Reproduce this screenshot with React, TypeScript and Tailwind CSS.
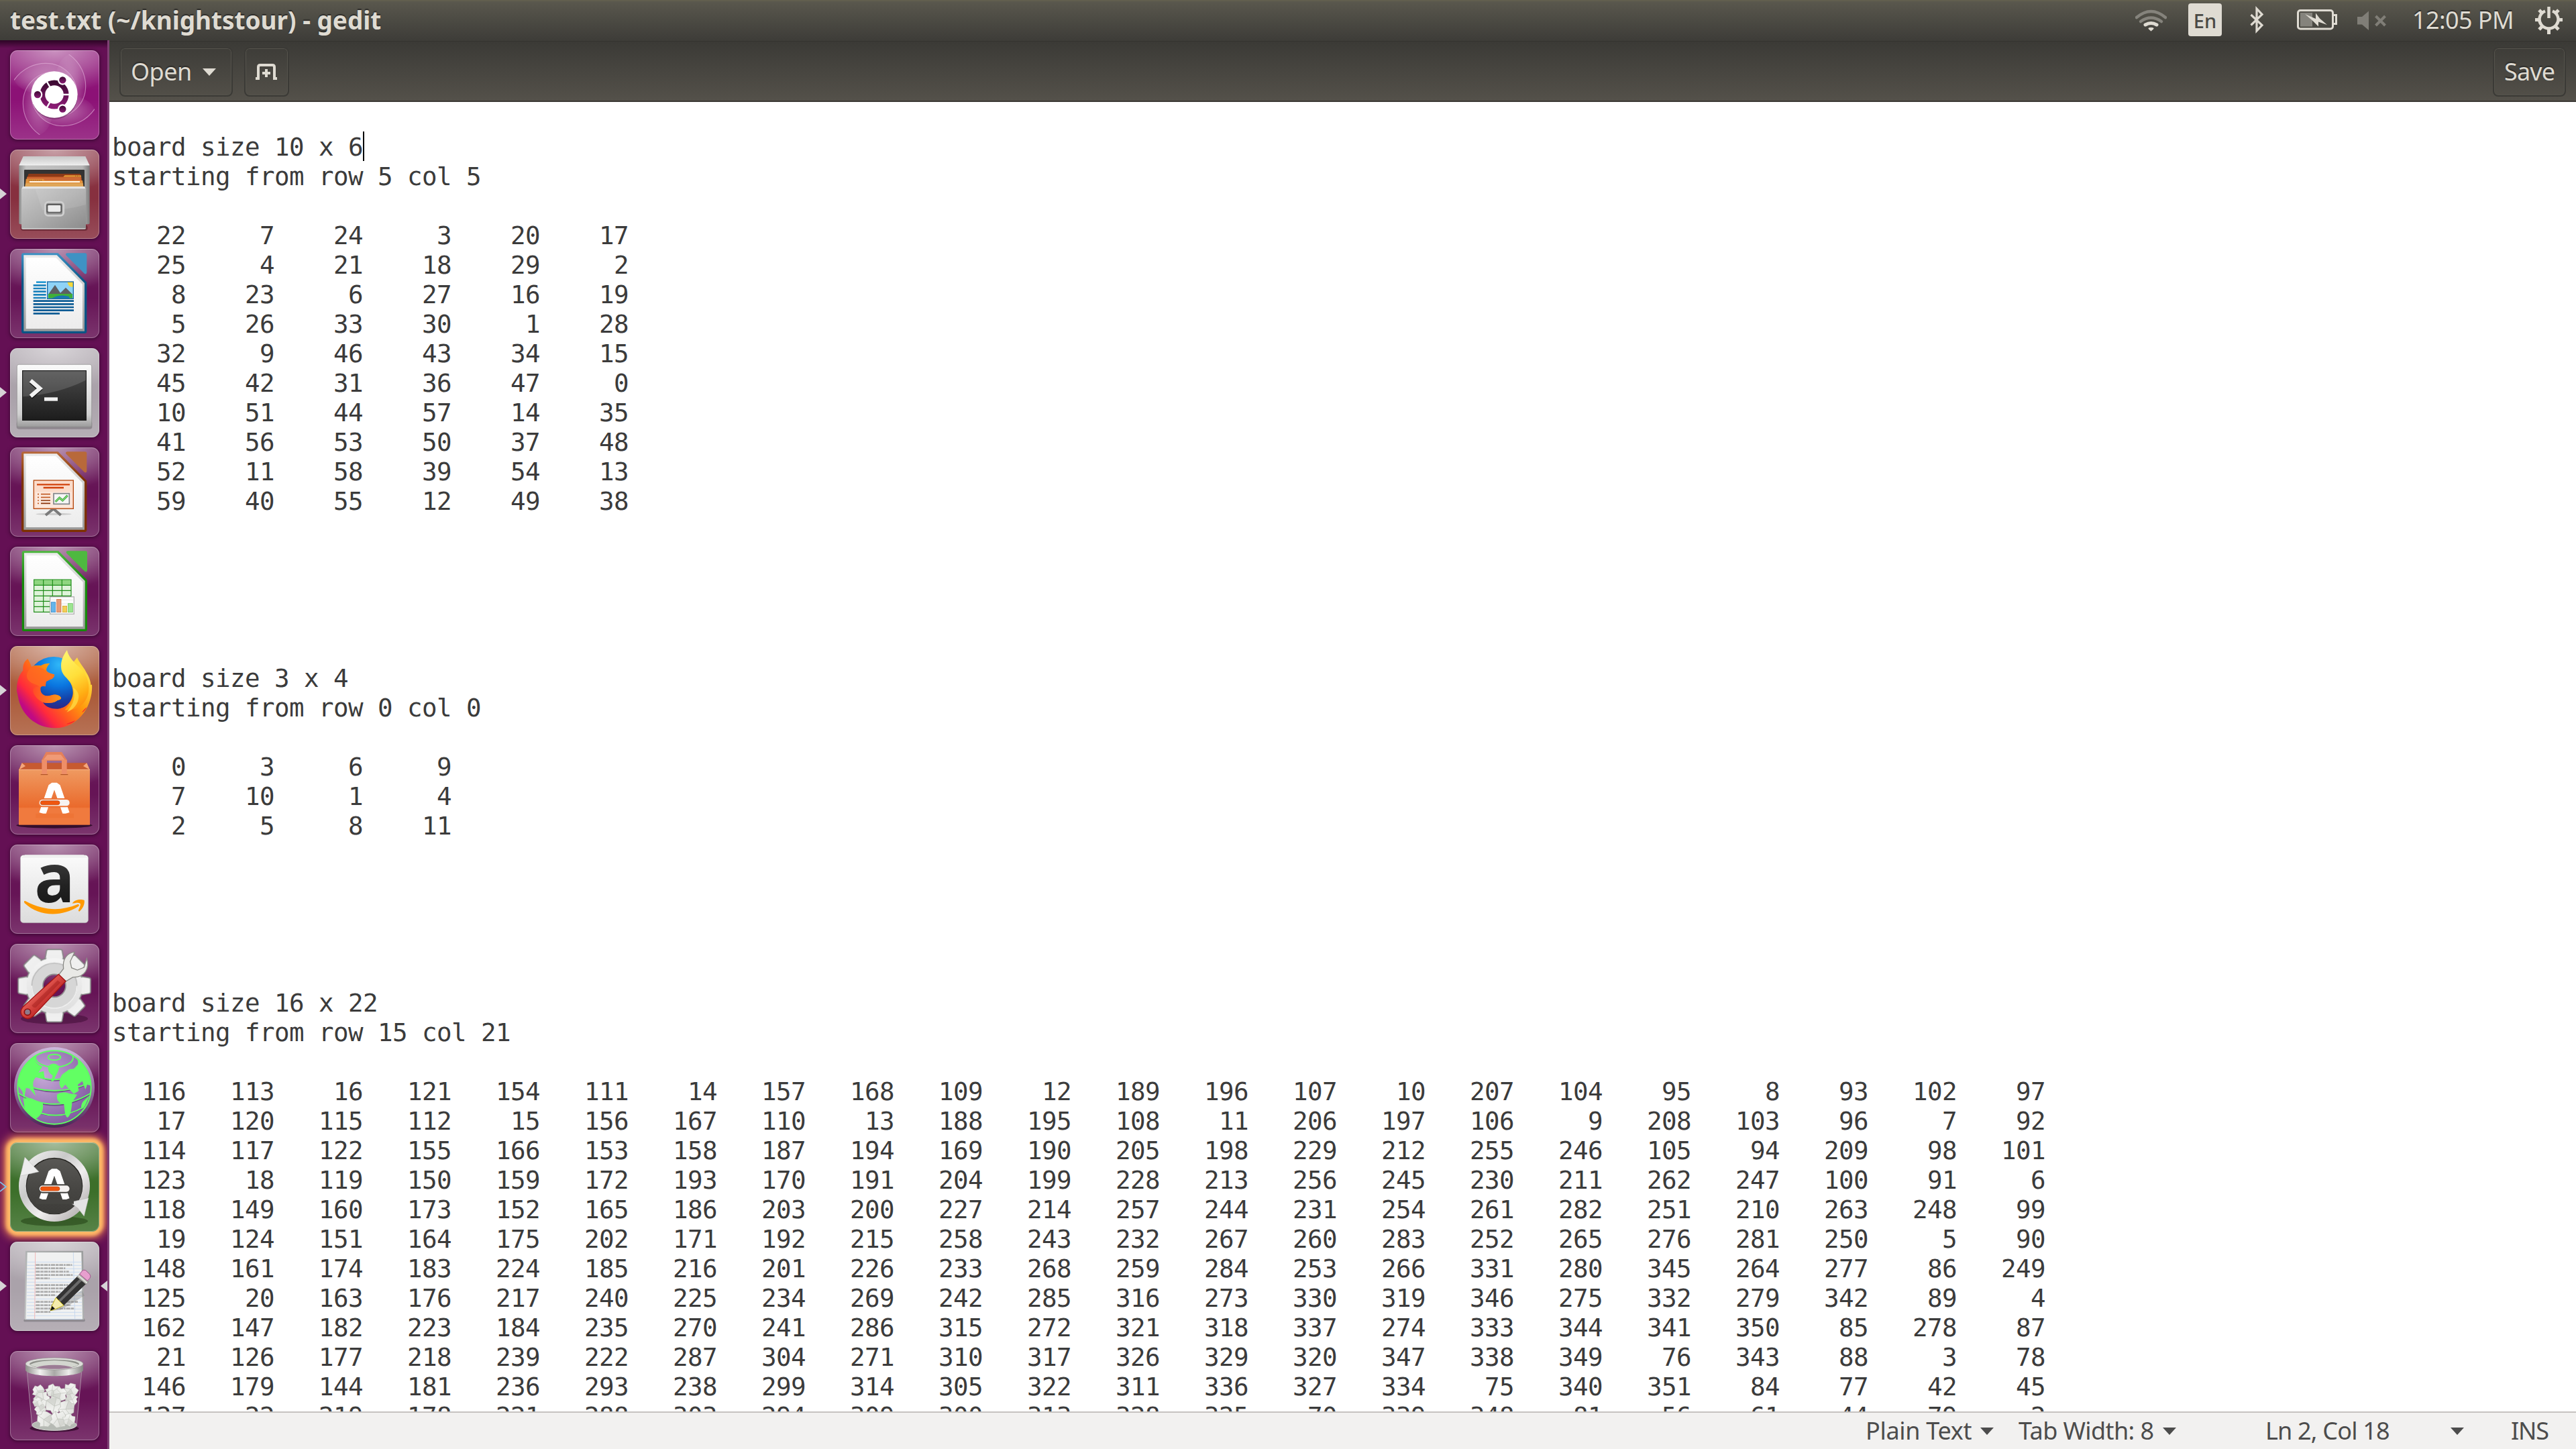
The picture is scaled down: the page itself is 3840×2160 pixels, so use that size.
import React from "react";

const BOARD_A = `22 7 24 3 20 17
25 4 21 18 29 2
8 23 6 27 16 19
5 26 33 30 1 28
32 9 46 43 34 15
45 42 31 36 47 0
10 51 44 57 14 35
41 56 53 50 37 48
52 11 58 39 54 13
59 40 55 12 49 38`;

const BOARD_B = `0 3 6 9
7 10 1 4
2 5 8 11`;

const BOARD_C = `116 113 16 121 154 111 14 157 168 109 12 189 196 107 10 207 104 95 8 93 102 97
17 120 115 112 15 156 167 110 13 188 195 108 11 206 197 106 9 208 103 96 7 92
114 117 122 155 166 153 158 187 194 169 190 205 198 229 212 255 246 105 94 209 98 101
123 18 119 150 159 172 193 170 191 204 199 228 213 256 245 230 211 262 247 100 91 6
118 149 160 173 152 165 186 203 200 227 214 257 244 231 254 261 282 251 210 263 248 99
19 124 151 164 175 202 171 192 215 258 243 232 267 260 283 252 265 276 281 250 5 90
148 161 174 183 224 185 216 201 226 233 268 259 284 253 266 331 280 345 264 277 86 249
125 20 163 176 217 240 225 234 269 242 285 316 273 330 319 346 275 332 279 342 89 4
162 147 182 223 184 235 270 241 286 315 272 321 318 337 274 333 344 341 350 85 278 87
21 126 177 218 239 222 287 304 271 310 317 326 329 320 347 338 349 76 343 88 3 78
146 179 144 181 236 293 238 299 314 305 322 311 336 327 334 75 340 351 84 77 42 45
127 22 219 178 221 288 303 294 309 300 313 328 325 70 339 348 81 56 61 44 79 2`;

// Right-aligns every value in the tab-like columns the program prints.
const board = (src: string) =>
  src.split("\n").map((row) => row.split(" ").map((n, i) => n.padStart(i === 0 ? 5 : 6)).join(""));

const LINES: string[] = [
  "",
  "board size 10 x 6",
  "starting from row 5 col 5",
  "",
  ...board(BOARD_A),
  "", "", "", "", "",
  "board size 3 x 4",
  "starting from row 0 col 0",
  "",
  ...board(BOARD_B),
  "", "", "", "", "",
  "board size 16 x 22",
  "starting from row 15 col 21",
  "",
  ...board(BOARD_C),
];

/* ---------- launcher artwork ---------- */

function Art({ y, children }: { y: number; children: React.ReactNode }) {
  return (
    <svg className="block h-[133px] w-[133px]" viewBox={`45 ${y} 399 399`}>
      {children}
    </svg>
  );
}

function DashIcon() {
  return (
    <Art y={45}>
      <defs>
        <clipPath id="dc"><rect x="63" y="63" width="360" height="360" /></clipPath>
        <linearGradient id="dg" x1="0" y1="0" x2="0" y2="1">
          <stop offset="0" stopColor="#3d0a33" /><stop offset="1" stopColor="#8a1b74" />
        </linearGradient>
        <radialGradient id="dw"><stop offset="0.4" stopColor="#fff" stopOpacity="0.7" /><stop offset="1" stopColor="#fff" stopOpacity="0.1" /></radialGradient>
      </defs>
      <g clipPath="url(#dc)">
        {[0, 90, 180, 270].map((a) => (
          <path key={a} transform={`rotate(${a} 243 243)`} d="M63 178 C100 125 155 103 205 103 C285 103 345 165 345 243 L243 243 C180 243 90 240 63 178Z" fill="url(#dw)" opacity="0.35" />
        ))}
        {[0, 90, 180, 270].map((a) => (
          <path key={a} transform={`rotate(${a} 243 243)`} d="M63 178 C100 125 155 103 205 103 C285 103 345 165 345 243" fill="none" stroke="#e3b4da" strokeOpacity="0.6" strokeWidth="3.5" />
        ))}
      </g>
      <circle cx="244" cy="250" r="103" fill="#3a0730" opacity="0.35" />
      <circle cx="243" cy="243" r="104" fill="#fff" />
      <circle cx="243" cy="243" r="53" fill="none" stroke="url(#dg)" strokeWidth="23" />
      {[0, 120, 240].map((a) => (
        <path key={a} transform={`rotate(${a} 243 243)`} d="M280 243H312" stroke="#fff" strokeWidth="7" />
      ))}
      {[[168, 243], [280, 178], [280, 308]].map(([x, y]) => (
        <g key={y}><circle cx={x} cy={y} r="22" fill="#fff" /><circle cx={x} cy={y} r="15.5" fill="url(#dg)" /></g>
      ))}
    </Art>
  );
}

function FilesIcon() {
  return (
    <Art y={489}>
      <defs>
        <linearGradient id="fa" x1="0" y1="0" x2="1" y2="0"><stop offset="0" stopColor="#8f8f8f" /><stop offset=".1" stopColor="#c4c4c4" /><stop offset=".9" stopColor="#b5b5b5" /><stop offset="1" stopColor="#7d7d7d" /></linearGradient>
        <linearGradient id="fb" x1="0" y1="0" x2="1" y2="1"><stop offset="0" stopColor="#c9c9c9" /><stop offset=".5" stopColor="#adadad" /><stop offset="1" stopColor="#8b8b8b" /></linearGradient>
        <linearGradient id="fc" x1="0" y1="0" x2="0" y2="1"><stop offset="0" stopColor="#c8c8c8" /><stop offset="1" stopColor="#ececec" /></linearGradient>
      </defs>
      <rect x="92" y="826" width="300" height="26" rx="12" fill="#4d1520" opacity=".5" />
      <rect x="85" y="555" width="316" height="268" rx="6" fill="url(#fa)" />
      <path d="M104 519H382L400 558H86Z" fill="url(#fc)" />
      <path d="M86 558H400" stroke="#f5f5f5" strokeWidth="3" />
      <rect x="108" y="579" width="270" height="82" rx="3" fill="#333" />
      <path d="M128 597H358L366 622H118Z" fill="#8c3a18" />
      <path d="M122 610H284L290 603H362L368 640H118Z" fill="#b8501e" />
      <path d="M120 613H362V627H120Z" fill="#cf6a36" />
      <path d="M284 610L290 603H361L364 612H284Z" fill="#d98a32" />
      <path d="M116 620H194L200 627H369L374 656H112Z" fill="#e0913d" />
      <path d="M132 630H357V636H132Z" fill="#fff6e8" />
      <path d="M114 640H371V656H112Z" fill="#dfa659" />
      <path d="M128 626H186M336 607H356" stroke="#7a4a18" strokeWidth="2.5" strokeDasharray="5 4" />
      <path d="M102 654H378L384 667H96Z" fill="#e4e4e4" />
      <path d="M96 664H384V838Q384 846 376 846H104Q96 846 96 838Z" fill="url(#fb)" />
      <path d="M158 667H384V735Q300 760 190 760Z" fill="#fff" opacity=".1" />
      <path d="M97 842H383" stroke="#d5d5d5" strokeWidth="3" />
      <rect x="202" y="724" width="82" height="60" rx="14" fill="#8f8f8f" stroke="#cfcfcf" strokeWidth="9" />
      <rect x="207" y="732" width="70" height="40" rx="7" fill="#5e5e5e" />
      <rect x="214" y="738" width="57" height="29" rx="4" fill="#ececec" />
    </Art>
  );
}

/* Document page with the folded corner that the office launchers share. */
function Page({ id, x, y, top, bottom }: { id: string; x: number; y: number; top: string; bottom: string }) {
  return (
    <g transform={`translate(${x} ${y})`}>
      <defs>
        <linearGradient id={id} x1="0" y1="0" x2="0" y2="1"><stop offset="0" stopColor={top} /><stop offset=".35" stopColor={bottom} /><stop offset="1" stopColor={bottom} /></linearGradient>
        <linearGradient id={id + "p"} x1="0" y1="0" x2="0" y2="1"><stop offset="0" stopColor="#fff" /><stop offset="1" stopColor="#ececec" /></linearGradient>
        <linearGradient id={id + "s"} x1="0" y1="0" x2="0" y2="1"><stop offset="0" stopColor="#ededed" /><stop offset="1" stopColor="#9a9a9a" /></linearGradient>
      </defs>
      <path d="M8 0H164L292 130V350Q292 359 283 359H9Q0 359 0 350V9Q0 0 8 0Z" fill={`url(#${id})`} />
      <path d="M10 9H158L282 134V349H10Z" fill={`url(#${id}s)`} />
      <path d="M20 20H154L273 139V338H20Z" fill={`url(#${id}p)`} />
      <path d="M205 0H284Q292 0 292 8V86Q292 96 282 92L200 10Q194 2 205 0Z" fill={top} />
    </g>
  );
}

function WriterIcon() {
  return (
    <Art y={933}>
      <Page id="wr" x={96} y={952} top="#3f92c4" bottom="#0a5485" />
      <path d="M162 1082H206" stroke="#2b9bd4" strokeWidth="8" />
      <path d="M149 1096H206M149 1110H206M149 1124H206M149 1138H206M149 1152H206" stroke="#1c83bd" strokeWidth="8" />
      <path d="M149 1166H330M149 1180H330M149 1194H330M149 1208H330M149 1222H267" stroke="#0d5c95" strokeWidth="8" />
      <rect x="212" y="1080" width="116" height="76" fill="#8fd3f7" />
      <path d="M301 1081H327V1103A20 20 0 0 1 303 1087Z" fill="#f6d83a" />
      <path d="M216 1136L246 1094L270 1130L294 1106L324 1136V1142H216Z" fill="#5c5f63" />
      <path d="M216 1134H324V1154H216Z" fill="#3fae3a" />
      <path d="M232 1154Q270 1134 308 1146L312 1154Z" fill="#1775b5" />
      <rect x="212" y="1080" width="116" height="76" fill="none" stroke="#1567a5" strokeWidth="4" />
    </Art>
  );
}

function TerminalIcon() {
  return (
    <Art y={57}>
      <defs>
        <linearGradient id="ta" x1="0" y1="0" x2="0" y2="1"><stop offset="0" stopColor="#fafafa" /><stop offset=".8" stopColor="#cfcfcf" /><stop offset="1" stopColor="#9c9c9c" /></linearGradient>
        <linearGradient id="tb" x1="0" y1="0" x2="0" y2="1"><stop offset="0" stopColor="#4a4a4a" /><stop offset="1" stopColor="#1c1c1c" /></linearGradient>
      </defs>
      <rect x="74" y="385" width="338" height="34" rx="10" fill="#4a444a" opacity=".35" />
      <rect x="76" y="130" width="334" height="279" rx="8" fill="url(#ta)" stroke="#8b8b8b" strokeWidth="2" />
      <rect x="99" y="156" width="288" height="225" fill="url(#tb)" />
      <path d="M102 158H384V200Q260 262 102 274Z" fill="#fff" opacity=".14" />
      <rect x="101" y="158" width="284" height="221" fill="none" stroke="#1a1a1a" strokeWidth="3" />
      <path d="M137 202L176 237L137 272" fill="none" stroke="#111" strokeWidth="18" transform="translate(1 5)" />
      <path d="M137 202L178 237L137 272" fill="none" stroke="#f2f2f2" strokeWidth="18" />
      <rect x="198" y="277" width="60" height="16" fill="#f2f2f2" />
    </Art>
  );
}

function ImpressIcon() {
  return (
    <Art y={501}>
      <Page id="im" x={96} y={520} top="#b8693a" bottom="#7d3000" />
      <ellipse cx="240" cy="799" rx="80" ry="5" fill="#ccc" />
      <path d="M238 776L204 804M240 776L272 804M239 772V784" stroke="#7b7b7b" strokeWidth="12" />
      <rect x="151" y="648" width="177" height="127" fill="#fbdccb" stroke="#b5490f" strokeWidth="4" />
      <rect x="160" y="700" width="160" height="68" fill="#fff" opacity=".35" />
      <path d="M165 667H312M194 681H285" stroke="#d1420c" strokeWidth="7" />
      <path d="M183 710H225M183 724H225" stroke="#c25d28" strokeWidth="5" />
      <path d="M183 738H225M183 751H225" stroke="#8a3209" strokeWidth="5" />
      <path d="M168 710H174M168 724H174M168 738H174M168 751H174" stroke="#c25d28" strokeWidth="5" />
      <rect x="240" y="707" width="70" height="47" fill="#f6f6f6" stroke="#808488" strokeWidth="5" />
      <path d="M248 744L266 726L280 738L302 716" fill="none" stroke="#2f9a2f" strokeWidth="9" />
      <path d="M248 744L266 726L280 738L302 716" fill="none" stroke="#8be27d" strokeWidth="4" />
    </Art>
  );
}

function CalcIcon() {
  return (
    <Art y={945}>
      <Page id="ca" x={98} y={964} top="#4eb840" bottom="#168a0b" />
      <rect x="152" y="1092" width="166" height="145" fill="#dff3da" />
      <rect x="152" y="1092" width="166" height="25" fill="#8fd680" />
      <path d="M152 1092H318V1237H152ZM152 1117H318M152 1141H318M152 1165H318M152 1189H318M152 1213H318M194 1092V1237M235 1092V1237M277 1092V1237" fill="none" stroke="#1e8c18" strokeWidth="3.5" />
      <rect x="224" y="1169" width="107" height="77" fill="#fcfcfc" stroke="#b3b3b3" strokeWidth="4" />
      <path d="M230 1183H326M230 1200H326" stroke="#ddd" strokeWidth="2" />
      <rect x="229" y="1193" width="19" height="45" fill="#64b5ea" stroke="#2a7fc0" strokeWidth="2" />
      <rect x="254" y="1180" width="19" height="58" fill="#e89b77" stroke="#c7663a" strokeWidth="2" />
      <rect x="280" y="1210" width="19" height="28" fill="#f3cf55" stroke="#c99b1b" strokeWidth="2" />
      <rect x="304" y="1199" width="21" height="39" fill="#9be58f" stroke="#62bd55" strokeWidth="2" />
    </Art>
  );
}

function FirefoxIcon() {
  return (
    <Art y={39}>
      <defs>
        <radialGradient id="xa" cx=".6" cy=".15" r=".9"><stop offset="0" stopColor="#2fb7f8" /><stop offset=".45" stopColor="#0a76e0" /><stop offset=".75" stopColor="#153fa6" /><stop offset="1" stopColor="#3b1d77" /></radialGradient>
        <linearGradient id="xb" x1=".85" y1=".15" x2=".12" y2=".72"><stop offset="0" stopColor="#ffd93b" /><stop offset=".35" stopColor="#ff9a0c" /><stop offset=".62" stopColor="#ff5a1e" /><stop offset=".82" stopColor="#ff2a3c" /><stop offset="1" stopColor="#c00a83" /></linearGradient>
        <linearGradient id="xc" x1=".3" y1="0" x2=".6" y2="1"><stop offset="0" stopColor="#fff36a" /><stop offset=".45" stopColor="#ffdf3a" /><stop offset=".8" stopColor="#ffac12" /><stop offset="1" stopColor="#ff8a0f" /></linearGradient>
        <linearGradient id="xd" x1="0" y1="0" x2="1" y2="0"><stop offset="0" stopColor="#ff4a28" /><stop offset="1" stopColor="#ff9a16" /></linearGradient>
      </defs>
      <circle cx="240" cy="205" r="118" fill="url(#xa)" />
      <path d="M345 90C352 110 372 130 385 155C400 180 405 195 406 212L411 212C414 250 402 300 376 336C345 380 300 406 246 406C160 406 92 345 80 262L75 240C74 200 84 170 103 148C101 125 108 108 124 96C130 106 136 118 141 132C155 122 180 128 184 126C195 118 208 116 223 117C215 124 208 136 207 146C210 158 228 162 243 166C244 178 236 186 222 190L206 198L203 220C194 216 184 218 180 226C178 242 186 258 206 262C225 264 240 252 256 258C268 262 274 268 273 273C268 282 262 278 254 284C238 294 215 296 192 291C205 312 228 320 256 320C296 318 322 288 326 252C329 210 300 185 290 160Z" fill="url(#xb)" />
      <path d="M206 150C190 135 165 128 141 132C120 150 112 180 130 195C150 215 165 205 180 226C184 216 194 216 203 220L206 198L222 190C236 186 244 178 243 166C225 162 210 158 206 150Z" fill="#ff6a22" opacity=".75" />
      <path d="M148 232C155 220 175 218 182 222C178 242 186 258 206 262C225 264 240 252 256 258C268 262 274 268 273 273C268 282 262 278 254 284C238 294 215 296 192 291C160 275 145 250 148 232Z" fill="url(#xd)" />
      <path d="M300 57C282 82 268 110 275 146C282 180 325 192 328 240C330 275 315 300 290 325C340 330 385 300 395 250C402 205 392 165 345 125C325 105 305 85 300 57Z" fill="url(#xc)" />
      <path d="M326 225C340 262 330 300 298 335C330 325 352 295 352 262C350 245 340 232 326 225Z" fill="#ffe14a" opacity=".7" />
      <path d="M388 312C384 324 374 332 366 337C376 322 382 318 388 312ZM338 372C325 384 308 390 296 388C312 382 325 376 338 372Z" fill="#f2252e" />
    </Art>
  );
}

/* The software-centre mark: two slanted legs crossed by a progress pill. */
function CentreMark({ y, gap }: { y: number; gap: string }) {
  return (
    <g transform={`translate(0 ${y})`}>
      <path d="M190 136L232 14H254L296 136" fill="none" stroke="#fff" strokeWidth="31" strokeLinejoin="bevel" />
      <path d="M160 136H330V156H160Z" fill={gap} />
      <rect x="171" y="68" width="145" height="40" rx="20" fill={gap} />
      <rect x="176" y="74" width="135" height="28" rx="14" fill="#f6f3f1" />
      <rect x="181" y="79" width="86" height="18" rx="9" fill="#f0560f" stroke="#b83c05" strokeWidth="2" />
    </g>
  );
}

function SoftwareIcon() {
  return (
    <Art y={483}>
      <defs>
        <linearGradient id="sa" x1="0" y1="0" x2="0" y2="1"><stop offset="0" stopColor="#ef9a61" /><stop offset=".68" stopColor="#ea6a2c" /><stop offset=".7" stopColor="#f07a3e" /><stop offset="1" stopColor="#f07a3e" /></linearGradient>
      </defs>
      <ellipse cx="243" cy="841" rx="170" ry="13" fill="#1d0418" opacity=".75" />
      <path d="M98 562H388L402 592H84Z" fill="#c75a30" />
      <path d="M98 562L114 576L86 592ZM388 562L372 576L401 592Z" fill="#f4a67d" />
      <path d="M206 513H276L299 548V560H276V552H210V560H187V548Z" fill="#e5805a" />
      <path d="M212 525H272L290 548H194Z" fill="#f09a76" />
      <rect x="84" y="591" width="318" height="248" fill="url(#sa)" />
      <path d="M84 592H402" stroke="#f9bd95" strokeWidth="2.5" />
      <rect x="187" y="548" width="23" height="65" fill="#ee8e68" /><rect x="276" y="548" width="23" height="65" fill="#ee8e68" />
      <path d="M182 614H214M271 614H304" stroke="#a64a1e" strokeWidth="3" />
      <CentreMark y={652} gap="#ee7436" />
    </Art>
  );
}

function AmazonIcon() {
  return (
    <Art y={927}>
      <defs>
        <linearGradient id="aa" x1="0" y1="0" x2="0" y2="1"><stop offset="0" stopColor="#fbfbfb" /><stop offset="1" stopColor="#dcdcdc" /></linearGradient>
        <linearGradient id="ab" x1="0" y1="0" x2="0" y2="1"><stop offset="0" stopColor="#565656" /><stop offset=".6" stopColor="#222" /><stop offset="1" stopColor="#111" /></linearGradient>
      </defs>
      <rect x="91" y="974" width="304" height="303" rx="14" fill="url(#aa)" stroke="#9f9aa0" strokeWidth="1.5" />
      <path d="M94 986L112 973H374L392 986Z" fill="#f0f0f0" />
      <text x="244" y="1186" textAnchor="middle" fontFamily="Open Sans, sans-serif" fontWeight="700" fontSize="300" fill="url(#ab)">a</text>
      <path d="M108 1184C107 1178 112 1178 117 1181C195 1222 270 1226 346 1195C352 1192 357 1199 351 1203C275 1252 175 1250 110 1189Z" fill="#ff9900" />
      <path d="M323 1190C335 1172 362 1170 377 1176C380 1192 371 1214 355 1226C350 1225 350 1222 352 1218C358 1204 362 1194 358 1190C350 1184 337 1189 323 1190Z" fill="#ff9900" />
    </Art>
  );
}

function SettingsIcon() {
  const teeth = [0, 45, 90, 135, 180, 225, 270, 315];
  return (
    <Art y={21}>
      <defs>
        <linearGradient id="ga" x1="0" y1="0" x2="0" y2="1"><stop offset="0" stopColor="#f5f5f5" /><stop offset="1" stopColor="#dedede" /></linearGradient>
        <linearGradient id="gb" x1="0" y1="0" x2="1" y2="1"><stop offset=".3" stopColor="#ee6a60" /><stop offset=".7" stopColor="#b71c1c" /></linearGradient>
        <mask id="gm"><rect x="45" y="21" width="399" height="399" fill="#fff" /><circle cx="243" cy="208" r="50" fill="#000" /></mask>
      </defs>
      <ellipse cx="243" cy="356" rx="150" ry="24" fill="#3a0a30" opacity=".5" />
      <g mask="url(#gm)">
        {teeth.map((a) => (
          <path key={a} transform={`rotate(${a} 243 208)`} d="M201 92L208 52Q209 46 216 46H270Q277 46 278 52L285 92Z" fill="#f0f0f0" stroke="#858585" strokeWidth="5" />
        ))}
        <circle cx="243" cy="208" r="127" fill="#ececec" stroke="#858585" strokeWidth="5" />
        {teeth.map((a) => (
          <path key={a} transform={`rotate(${a} 243 208)`} d="M205 94L211 70H275L281 94Z" fill="#efefef" />
        ))}
        <circle cx="243" cy="208" r="124" fill="url(#ga)" />
        <circle cx="243" cy="208" r="101" fill="#d6d6d6" stroke="#b4b4b4" strokeWidth="4" />
        <path d="M142 208A101 101 0 0 0 344 208" fill="none" stroke="#fbfbfb" strokeWidth="4" />
      </g>
      <circle cx="243" cy="208" r="51" fill="none" stroke="#8d8d8d" strokeWidth="5" />
      <path d="M262 160L284 132C278 90 300 60 334 58L314 100L320 128L346 138L376 126L388 86C402 130 380 172 326 170L296 188Z" fill="#e9e9e6" stroke="#8a8a86" strokeWidth="4" />
      <path d="M262 157L294 188L148 344Q124 366 102 346Q84 326 102 304Z" fill="url(#gb)" stroke="#a31515" strokeWidth="4" />
      <path d="M258 184L270 194L160 306Q148 308 142 296Z" fill="#8f1111" opacity=".35" />
      <circle cx="123" cy="326" r="14" fill="#8e7a8b" stroke="#8d1010" strokeWidth="5" />
    </Art>
  );
}

function TorIcon() {
  return (
    <Art y={465}>
      <defs>
        <linearGradient id="oa" x1="0" y1="0" x2="0" y2="1"><stop offset="0" stopColor="#cdb9dc" /><stop offset=".55" stopColor="#93709f" /><stop offset="1" stopColor="#4b2456" /></linearGradient>
        <radialGradient id="ob" cx=".35" cy=".35" r=".75"><stop offset="0" stopColor="#c5a8d6" /><stop offset="1" stopColor="#7f57a0" /></radialGradient>
        <clipPath id="oc"><circle cx="243" cy="663" r="164" /></clipPath>
      </defs>
      <circle cx="243" cy="663" r="180" fill="url(#oa)" />
      <circle cx="243" cy="663" r="164" fill="url(#ob)" />
      <g clipPath="url(#oc)">
        <g transform="translate(0 3)" fill="none" stroke="#4a2d63" strokeWidth="5" opacity=".6">
          <path d="M84 640Q243 720 404 640M84 690Q243 790 404 690M110 750Q243 820 376 750M170 610Q243 650 330 610" />
        </g>
        <g fill="none" stroke="#5dff62" strokeWidth="6">
          <ellipse cx="243" cy="528" rx="28" ry="13" />
          <ellipse cx="243" cy="530" rx="84" ry="42" />
          <path d="M160 614Q243 640 300 616M84 640Q243 715 404 640M84 690Q243 785 404 690M110 745Q243 828 376 750" />
        </g>
        <g fill="#62ff63">
          <path d="M160 510C150 530 158 560 190 570L172 596L195 590L200 622L160 618C140 640 148 660 160 702L132 668L116 665L108 715L100 680L84 660L70 640L90 570L120 530Z" />
          <path d="M215 568Q240 545 264 568C266 590 252 600 240 634L228 638L236 610C220 600 214 590 215 568Z" />
          <path d="M318 508C345 525 352 545 348 560L330 580L310 582L278 605C262 630 262 655 276 668L292 650L304 665L330 692L352 678L348 650L368 635L382 672L390 650L405 655V590L370 530Z" />
          <path d="M104 712L140 712L192 735C196 770 180 790 165 800L150 805L112 770Z" />
          <path d="M256 694Q280 678 310 690L345 695L322 730C320 760 316 790 302 798C288 790 290 760 286 738C266 738 250 720 256 694Z" />
          <path d="M400 700L372 725Q358 745 366 760L380 745Z" />
        </g>
      </g>
      <circle cx="243" cy="663" r="164" fill="none" stroke="#5dff62" strokeWidth="6" />
    </Art>
  );
}

function UpdaterIcon() {
  return (
    <Art y={38}>
      <defs>
        <linearGradient id="ua" x1="0" y1="0" x2="1" y2="1"><stop offset="0" stopColor="#f4f4f4" /><stop offset=".35" stopColor="#c9c9c9" /><stop offset=".6" stopColor="#f0eeee" /><stop offset="1" stopColor="#a9a5a5" /></linearGradient>
        <linearGradient id="ub" x1="0" y1="0" x2="0" y2="1"><stop offset="0" stopColor="#5b5a57" /><stop offset=".55" stopColor="#474643" /><stop offset="1" stopColor="#3c3b38" /></linearGradient>
      </defs>
      <ellipse cx="243" cy="390" rx="150" ry="22" fill="#1d3a10" opacity=".5" />
      <circle cx="243" cy="234" r="142" fill="url(#ub)" />
      <circle cx="243" cy="235" r="126" fill="none" stroke="#23221f" strokeWidth="4" />
      <circle cx="243" cy="233" r="143" fill="none" stroke="url(#ua)" strokeWidth="32" />
      <path d="M111 104L174 169L91 188Z" fill="#ededed" stroke="#bbb" strokeWidth="1.5" />
      <path d="M396 286L313 306L348 332L376 368Z" fill="#e4e4e4" stroke="#b5b5b5" strokeWidth="1.5" />
      <CentreMark y={157} gap="#454441" />
    </Art>
  );
}

function GeditIcon() {
  const rows = [587, 602, 617, 632, 647, 677, 692, 707, 722, 752, 767, 782, 797];
  const ends = [322, 292, 308, 325, 222, 305, 300, 270, 250, 348, 318, 334, 226];
  return (
    <Art y={483}>
      <defs>
        <linearGradient id="ea" x1="0" y1="1" x2="1" y2="0"><stop offset="0" stopColor="#c5c8c8" /><stop offset="1" stopColor="#9a9c9c" /></linearGradient>
      </defs>
      <path d="M112 826H376L381 834Q381 841 374 841H112Q105 841 106 834Z" fill="#8d898f" />
      <path d="M114 524H372L376 832H110Z" fill="url(#ea)" />
      <path d="M122 531H364L369 829H116Z" fill="#f0f1f1" />
      {Array.from({ length: 18 }, (_, i) => (
        <path key={i} d={`M120 ${574 + i * 15}H366`} stroke="#c3d5ee" strokeWidth="2.5" />
      ))}
      <path d="M158 531L155 829" stroke="#f2b8b8" strokeWidth="3" />
      <path d="M328 531L335 829" stroke="#c3d5ee" strokeWidth="2.5" />
      {rows.map((y, i) => (
        <path key={y} d={`M160 ${y}H${ends[i]}`} stroke="#adadad" strokeWidth="8" strokeDasharray="18 3 13 3 17 3 8 3" />
      ))}
      <path d="M228 792L366 700L378 724L320 760L270 788Z" fill="#777" opacity=".35" />
      <path d="M250 733L344 640L385 671L285 768Z" fill="#333" />
      <path d="M262 745L356 650L366 658L270 752Z" fill="#6a6a6a" />
      <path d="M344 640L356 628L395 662L385 674Z" fill="#b7b7b2" stroke="#6f6f6b" strokeWidth="2" />
      <path d="M350 634L390 668" stroke="#ededea" strokeWidth="4" />
      <path d="M356 628L368 613Q374 607 383 611L401 628Q408 636 402 646L391 658Z" fill="#e79fce" stroke="#a2588d" strokeWidth="3" />
      <path d="M250 733L285 768L240 788L225 791L230 774Z" fill="#f4ecac" stroke="#c8b818" strokeWidth="3" />
      <path d="M233 770L225 791L246 783Z" fill="#111" />
    </Art>
  );
}

function TrashIcon() {
  const balls: [number, number, number][] = [
    [172, 1150, 26], [236, 1148, 28], [318, 1146, 30], [270, 1165, 30], [190, 1190, 34], [320, 1190, 26],
    [240, 1215, 36], [180, 1236, 24], [296, 1228, 34], [200, 1276, 34], [262, 1276, 36], [310, 1278, 26], [168, 1200, 20],
  ];
  return (
    <Art y={972}>
      <defs>
        <linearGradient id="ra" x1="0" y1="0" x2="1" y2="0"><stop offset="0" stopColor="#8d8d8a" /><stop offset=".25" stopColor="#f2f2f0" /><stop offset=".5" stopColor="#a9a9a6" /><stop offset=".75" stopColor="#ededeb" /><stop offset="1" stopColor="#858583" /></linearGradient>
        <linearGradient id="rb" x1="0" y1="0" x2="1" y2="1"><stop offset="0" stopColor="#fcfcfb" /><stop offset="1" stopColor="#d6d8d2" /></linearGradient>
      </defs>
      <ellipse cx="243" cy="1318" rx="110" ry="16" fill="#2a0622" opacity=".7" />
      <path d="M121 1060H365L343 1302Q243 1350 143 1302Z" fill="#fff" opacity=".12" />
      <ellipse cx="243" cy="1303" rx="100" ry="24" fill="#b6bab4" stroke="#d8dad6" strokeWidth="3" />
      {balls.map(([x, y, r], i) => (
        <g key={i} transform={`translate(${x} ${y}) rotate(${i * 37}) scale(${r / 30})`}>
          <path d="M-30 -6L-18 -26L-4 -22L10 -32L22 -20L32 -4L26 12L30 22L12 28L-2 34L-16 24L-32 18L-24 6Z" fill="url(#rb)" stroke="#b3b6af" strokeWidth="1.5" />
          <path d="M-18 -26L-4 0L32 -4M-4 0L-16 24M-4 0L12 28" fill="none" stroke="#c3c6bf" strokeWidth="2" />
          <path d="M-4 0L32 -4L26 12L12 28Z" fill="#c8cac4" opacity=".5" />
        </g>
      ))}
      <path d="M121 1066L143 1300M365 1066L343 1300" stroke="#a98aa3" strokeWidth="3" fill="none" />
      <path d="M114 1030V1058C130 1092 356 1092 372 1058V1030Z" fill="url(#ra)" />
      <ellipse cx="243" cy="1029" rx="129" ry="27" fill="#dcdcd9" stroke="#8f8f8c" strokeWidth="2" />
      <ellipse cx="243" cy="1030" rx="111" ry="20" fill="#8d8f89" />
      <path d="M134 1034Q160 1016 243 1014Q326 1016 352 1034Q320 1050 243 1050Q166 1050 134 1034Z" fill="#d3d6cf" />
      <path d="M160 1046Q190 1034 243 1034Q296 1034 326 1046Q290 1052 243 1052Q196 1052 160 1046Z" fill="#9c7c95" />
    </Art>
  );
}

/* ---------- launcher ---------- */

type Item = { name: string; tone: string; icon: React.ReactNode; running?: boolean; focused?: boolean; urgent?: boolean; last?: boolean };

const PLAIN = "bg-[#661456]";

const ITEMS: Item[] = [
  { name: "Dash", tone: "bg-[#8c1176]", icon: <DashIcon /> },
  { name: "Files", tone: "bg-[#87303f]", icon: <FilesIcon />, running: true },
  { name: "Writer", tone: PLAIN, icon: <WriterIcon /> },
  { name: "Terminal", tone: "bg-[#aaa2aa]", icon: <TerminalIcon />, running: true },
  { name: "Impress", tone: PLAIN, icon: <ImpressIcon /> },
  { name: "Calc", tone: PLAIN, icon: <CalcIcon /> },
  { name: "Firefox", tone: "bg-[#ab5b3a]", icon: <FirefoxIcon />, running: true },
  { name: "Software", tone: PLAIN, icon: <SoftwareIcon /> },
  { name: "Amazon", tone: PLAIN, icon: <AmazonIcon /> },
  { name: "Settings", tone: PLAIN, icon: <SettingsIcon /> },
  { name: "Tor", tone: PLAIN, icon: <TorIcon /> },
  { name: "Updater", tone: "bg-[#3c6f2a]", icon: <UpdaterIcon />, urgent: true },
  { name: "gedit", tone: "bg-[#aaa2aa]", icon: <GeditIcon />, running: true, focused: true },
  { name: "Trash", tone: PLAIN, icon: <TrashIcon />, last: true },
];

function Tile({ item }: { item: Item }) {
  return (
    <div className={`relative ml-[15px] h-[133px] w-[133px] shrink-0 ${item.last ? "mt-[15px]" : ""}`}>
      <div
        className={`h-full w-full overflow-hidden rounded-[11px] ${item.tone} ${
          item.urgent
            ? "shadow-[0_0_5px_6px_#ffb968,0_0_14px_9px_#f58a55]"
            : "shadow-[0_1px_5px_1px_rgba(30,0,25,0.5)]"
        }`}
      >
        <div className="h-full w-full bg-[radial-gradient(ellipse_85%_48%_at_50%_0%,rgba(255,255,255,0.48),rgba(255,255,255,0.2)_60%,transparent),linear-gradient(to_bottom,rgba(255,255,255,0.12),transparent_45%,transparent_55%,rgba(255,255,255,0.14))]">
          {item.icon}
        </div>
      </div>
      <div className="pointer-events-none absolute inset-0 rounded-[11px] border border-white/30" />
      {item.running && (
        <svg className="absolute top-[51px] -left-[15px] h-[30px] w-[10px]" viewBox="0 0 10 30">
          <path d="M0 7L10 15L0 23Z" fill="#d6d3d6" />
        </svg>
      )}
      {item.urgent && (
        <svg className="absolute top-[51px] -left-[15px] h-[30px] w-[10px]" viewBox="0 0 10 30">
          <path d="M0 8L9 15L0 22" fill="none" stroke="#7cc3ee" strokeWidth="1.6" />
        </svg>
      )}
      {item.focused && (
        <svg className="absolute top-[51px] left-[135px] h-[30px] w-[10px]" viewBox="0 0 10 30">
          <path d="M10 7L0 15L10 23Z" fill="#d6d3d6" />
        </svg>
      )}
    </div>
  );
}

function Launcher() {
  return (
    <div className="flex w-[163px] shrink-0 flex-col gap-[15px] overflow-hidden border-r-[3px] border-[#7f4174] bg-[#641054] bg-[linear-gradient(to_bottom,rgba(25,0,20,0.75),transparent_12px)] pt-[15px]">
      {ITEMS.map((it) => (
        <Tile key={it.name} item={it} />
      ))}
    </div>
  );
}

/* ---------- top panel ---------- */

function TopPanel() {
  return (
    <div className="flex h-[61px] shrink-0 items-start bg-[linear-gradient(to_bottom,#65624f,#59574d_3px,#3d3c38)] text-[#dfdbd2] [text-shadow:0_-2px_1px_#2e2d2a]">
      <div className="ml-[15px] h-[61px] text-[37px] leading-[60px] font-bold tracking-[-0.05px] whitespace-pre">test.txt (~/knightstour) - gedit</div>
      <div className="flex-1" />
      <svg className="h-[61px] w-[47px]" viewBox="3183 0 47 61" fill="none" strokeWidth="4.5">
        <path d="M3185 26Q3206.500 8 3228 26" stroke="#85837c" strokeLinecap="round" />
        <path d="M3191 32Q3206.500 21 3222 32" stroke="#85837c" strokeLinecap="round" />
        <path d="M3198 37Q3206.500 32 3215 37" stroke="#dfdbd2" strokeWidth="5" strokeLinecap="round" />
        <path d="M3203 42Q3206.500 40.500 3210 42V43L3206.500 46L3203 43Z" fill="#dfdbd2" stroke="#dfdbd2" strokeWidth="1" />
      </svg>
      <div className="mt-[5px] ml-8 h-[49px] w-[50px] rounded-[4px] bg-[#dfdbd2] text-center text-[29px] leading-[51px] font-medium text-[#4a4944] [text-shadow:none]">En</div>
      <svg className="ml-[42px] h-[61px] w-[21px]" viewBox="3354 0 21 61" fill="none" stroke="#dfdbd2" strokeWidth="3.2">
        <path d="M3355.500 22L3372 37.500L3364 46V13L3372 21.500L3355.500 37.500" />
      </svg>
      <svg className="ml-[49px] h-[61px] w-[61px]" viewBox="3424 0 61 61">
        <rect x="3425.500" y="15.500" width="52" height="27.500" rx="3.500" fill="none" stroke="#dfdbd2" strokeWidth="3" />
        <path d="M3479 22.500H3482.500V35.500H3479" fill="none" stroke="#dfdbd2" strokeWidth="3" />
        <rect x="3429" y="19" width="18" height="20.500" fill="#85837c" />
        <path d="M3436 21L3452 28V19.500L3458 27.500L3469 37L3456 32.500V39.500L3447.500 31Z" fill="#dfdbd2" />
      </svg>
      <svg className="ml-[29px] h-[61px] w-[44px]" viewBox="3514 0 44 61" fill="#807e77">
        <path d="M3514 25H3521L3531 16.500V45L3521 36.500H3514Z" />
        <path d="M3541.500 24L3555.500 38M3555.500 24L3541.500 38" stroke="#807e77" strokeWidth="4" />
      </svg>
      <div className="ml-[38px] w-[150px] text-[36px] leading-[60px] tracking-[-0.6px] whitespace-pre">12:05 PM</div>
      <svg className="mr-[20px] ml-[33px] h-[61px] w-[41px]" viewBox="3779 0 41 61" fill="none" stroke="#dfdbd2">
        <path d="M3794 16.500A14 13.500 0 1 0 3805 16.500" strokeWidth="4.500" />
        <path d="M3799.500 10V27" strokeWidth="4.500" />
        <path d="M3779 29.500H3786M3813 29.500H3820M3799.500 43V51M3785 15L3789.500 19.500M3814 15L3809.500 19.500M3785 44L3789.500 39.500M3814 44L3809.500 39.500" strokeWidth="5" />
      </svg>
    </div>
  );
}

/* ---------- gedit window ---------- */

const BUTTON = "flex h-[74px] items-center rounded-[8px] border-2 border-[#3b3a36] shadow-[inset_0_0_0_1px_#55534c]";

function Toolbar() {
  return (
    <div className="flex h-[91px] shrink-0 items-start border-t border-b-2 border-t-[#34332f] border-b-[#3c3a36] bg-[linear-gradient(to_bottom,#3b3a36,#54514a)] pt-2 text-[36px] leading-[48px] text-[#dfdbd2] [text-shadow:0_-2px_1px_#2e2d2a]">
      <div className={`${BUTTON} ml-[15px] w-[169px] pl-[15px]`}>
        <span className="w-[90px] tracking-[-0.5px]">Open</span>
        <svg className="ml-[17px] h-[11px] w-[20px]" viewBox="0 0 20 11"><path d="M0 0H20L10 11Z" fill="#dfdbd2" /></svg>
      </div>
      <div className={`${BUTTON} ml-[17px] w-[67px]`}>
        <svg className="ml-[15px] h-[24px] w-[32px]" viewBox="0 0 32 24" fill="none" stroke="#dfdbd2" strokeWidth="4">
          <path d="M0 22H4V5Q4 2 7 2H25Q28 2 28 5V22H32" />
          <path d="M10 14H22M16 8V20" />
        </svg>
      </div>
      <div className="flex-1" />
      <div className={`${BUTTON} mr-[15px] w-[109px] pl-[15px]`}>
        <span className="tracking-[-0.8px]">Save</span>
      </div>
    </div>
  );
}

function Arrow() {
  return (
    <svg className="h-[11px] w-[20px] shrink-0" viewBox="0 0 20 11"><path d="M0 0H20L10 11Z" fill="#4c4c4c" /></svg>
  );
}

function StatusBar() {
  return (
    <div className="flex h-[56px] shrink-0 items-center border-t-2 border-[#c6c3c0] bg-[#f2f1f0] pl-[2618px] text-[36px] leading-[54px] whitespace-pre text-[#4c4c4c]">
      <span className="w-[171px] shrink-0 tracking-[-0.3px]">Plain Text</span>
      <Arrow />
      <span className="ml-[37px] w-[215px] shrink-0 tracking-[-0.6px]">Tab Width: 8</span>
      <Arrow />
      <span className="ml-[133px] w-[276px] shrink-0 tracking-[-0.8px]">Ln 2, Col 18</span>
      <Arrow />
      <span className="ml-[70px] shrink-0 tracking-[-1.2px]">INS</span>
    </div>
  );
}

function Editor() {
  return (
    <div className="min-h-0 flex-1 overflow-hidden bg-white pl-1 font-['DejaVu_Sans_Mono',monospace] text-[37.5px] leading-[46px] tracking-[-0.576px] whitespace-pre text-[#3b3b3b]">
      {LINES.map((line, i) => (
        <div key={i} className="flex h-[44px]">
          {line}
          {i === 1 && <span className="h-[44px] w-[2px] bg-black" />}
        </div>
      ))}
    </div>
  );
}

export default function App() {
  return (
    <div className="flex h-[2160px] w-[3840px] flex-col overflow-hidden bg-white font-['Noto_Sans',sans-serif]">
      <TopPanel />
      <div className="-mt-px flex min-h-0 flex-1">
        <Launcher />
        <div className="flex min-w-0 flex-1 flex-col pt-px">
          <Toolbar />
          <Editor />
          <StatusBar />
        </div>
      </div>
    </div>
  );
}
